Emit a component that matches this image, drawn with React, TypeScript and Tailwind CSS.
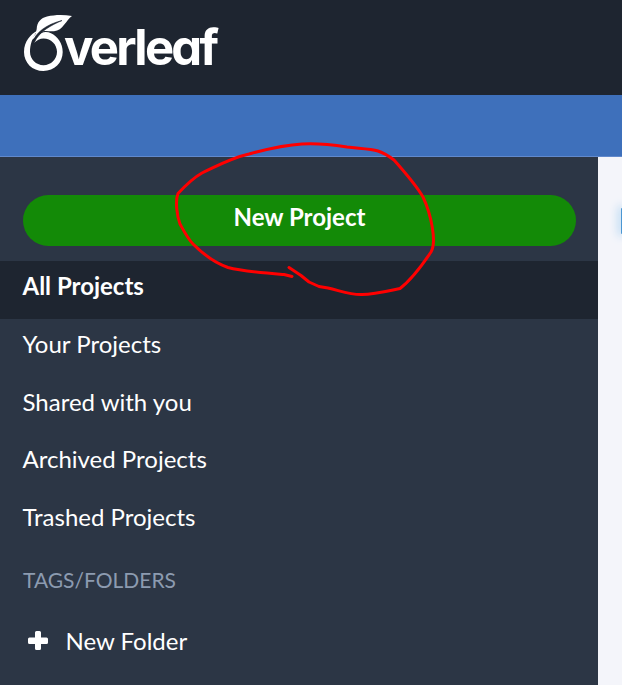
const filters = [
  { label: 'All Projects', active: true },
  { label: 'Your Projects', active: false },
  { label: 'Shared with you', active: false },
  { label: 'Archived Projects', active: false },
  { label: 'Trashed Projects', active: false },
]

function Logo() {
  return (
    <div className="flex items-start">
      <svg className="-mr-[9px] shrink-0" width="50" height="62" viewBox="0 0 50 62" fill="none">
        {/* Ring */}
        <path
          d="M14.500 18.500 C8 22 1 29 1 40 C1 51 9.500 59 20.300 59 C31.500 59 39.700 50.500 39.700 40 C39.700 31 34.500 24.500 28 21.300 C25 19.800 21.500 19.500 18.500 21 C14 23.500 11.500 27 11 31.200 C13.500 28 17 26.400 20.500 26.400 C28 26.400 34 32.300 34 39.800 C34 47.300 28 53.200 20.500 53.200 C13 53.200 7 47.300 7 39.800 C7 33 9 26 14.500 18.500 Z"
          fill="white"
        />
        {/* Leaf */}
        <path
          d="M12.500 22 L13.700 17 C14 10 18 6 24 4.500 C32 2.500 41 2.500 49 4 C43 8 40 18.500 31 19.300 C26 19.700 22 18 18.500 20 L11.500 26 L7 29 Z"
          fill="white"
        />
        <path d="M9.500 31 C12 21 23 12.500 39 8.500 C29 13 16 19 11 31.200 Z" fill="#1e2530" stroke="#1e2530" strokeWidth="0.6" />
      </svg>
      <span className="pt-[6px] font-['Inter',sans-serif] text-[49px] leading-[60px] font-bold tracking-[-2.700px] [font-feature-settings:'cv11']">
        verleaf
      </span>
    </div>
  )
}

function Annotation() {
  return (
    <svg className="pointer-events-none absolute top-0 left-0" width="622" height="685" fill="none">
      <path
        d="M289 267.500 L301 275.500 L309 282 L319 286.500 L328 288 C341 291 351 295 362 294.500 C374 294.500 388 291 400 288.500 C411 280 423 264 431 252 C437 242 431 214 423 197 C416 185 402 169 394 160 C390 157 384 153 378 151 C370 148.500 359 148.500 347 147 C334 145 317 143 302 144 C282 145 264 150 249 154 C231 158 219 165 202 173 C193 178 185 186 178 193.500 C175 201 177 216 180 224 C185 233 188 239 193 244 C206 257 218 264 228 267.500 C243 271.500 264 273 284 274.500 L292 276.500"
        stroke="#ff0000"
        strokeWidth="3"
        strokeLinecap="round"
        strokeLinejoin="round"
      />
    </svg>
  )
}

export default function App() {
  return (
    <div className="relative flex h-[685px] w-[622px] flex-col overflow-hidden bg-[#f4f5fa] font-['Lato',sans-serif] text-2xl text-white">
      <header className="h-[95px] shrink-0 bg-[#1e2530] pt-3 pl-[23px]">
        <Logo />
      </header>
      <div className="h-[62px] shrink-0 border-b border-[#6189cc] bg-[#3e70bb]" />

      <div className="flex flex-1">
        <aside className="w-[598px] shrink-0 bg-[#2c3645] pt-[38px]">
          <div className="px-[23px] pr-[22px]">
            <button className="flex h-[51px] w-full items-center justify-center rounded-full bg-[#138a07] pb-[7px] font-bold">
              New Project
            </button>
          </div>

          <ul className="mt-[15px]">
            {filters.map((filter) => (
              <li
                key={filter.label}
                className={
                  filter.active
                    ? 'flex h-[58px] items-center bg-[#1e2530] pb-[8px] pl-[22.500px] font-bold'
                    : 'flex h-[57.700px] items-center pb-[8px] pl-[22.500px]'
                }
              >
                {filter.label}
              </li>
            ))}
          </ul>

          <h2 className="mt-[12px] pl-[23px] text-[21px] leading-[36px] text-[#8c9bb0] uppercase">Tags/Folders</h2>
          <button className="mt-[23px] flex h-[40px] items-center pl-[28px]">
            <svg className="mr-[17.500px]" width="20" height="20" fill="white">
              <path d="M8.500 0h3q1.500 0 1.500 1.500V6.500h5.500q1.500 0 1.500 1.500v3.500q0 1.500-1.500 1.500H13v4.500q0 1.500-1.500 1.500h-3q-1.500 0-1.500-1.500V13H1.500Q0 13 0 11.500v-3.500Q0 6.500 1.500 6.500H7V1.500Q7 0 8.500 0z" />
            </svg>
            <span className="pt-px">New Folder</span>
          </button>
        </aside>

        <main className="flex flex-1 justify-end pt-[51px]">
          <div className="h-[26px] w-px rounded-l-full bg-[#4b97d3] shadow-[0_0_10px_2px_#a5cff0]" />
        </main>
      </div>

      <Annotation />
    </div>
  )
}
